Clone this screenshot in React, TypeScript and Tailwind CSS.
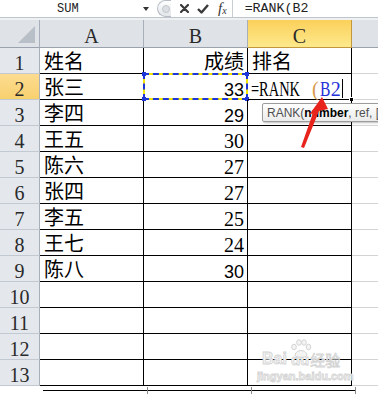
import React from 'react';

type Row = { n: number; name?: string; score?: string; sans?: boolean };

const rows: Row[] = [
  { n: 1, name: '姓名', score: '成绩' },
  { n: 2, name: '张三', score: '33', sans: true },
  { n: 3, name: '李四', score: '29', sans: true },
  { n: 4, name: '王五', score: '30' },
  { n: 5, name: '陈六', score: '27' },
  { n: 6, name: '张四', score: '27' },
  { n: 7, name: '李五', score: '25' },
  { n: 8, name: '王七', score: '24' },
  { n: 9, name: '陈八', score: '30', sans: true },
  { n: 10 },
  { n: 11 },
  { n: 12 },
  { n: 13 },
];

const cjk = "font-['Noto_Sans_CJK_SC',sans-serif]";
const serif = "font-['Liberation_Serif',serif]";
const sans = "font-['Liberation_Sans',sans-serif]";
const mono = "font-['Liberation_Mono',monospace]";

const FormulaBar = () => (
  <div className="flex h-[17px] items-center bg-white text-[#222]">
    <div className={`w-[140px] pl-[57px] text-[12px] leading-none ${mono}`}>SUM</div>
    <div className="ml-[3px] h-0 w-0 border-x-[3px] border-t-[4px] border-x-transparent border-t-[#333]" />
    <div className="ml-[8px] flex h-[17px] w-[14px] items-center justify-end rounded-l-full border border-r-0 border-[#b7bdc5] bg-linear-to-b from-white to-[#e2e5e9] pr-[1px]">
      <div className="h-[8px] w-[8px] rounded-full border border-[#c2c6cc] bg-[#dcdfe3]" />
    </div>
    <svg className="ml-[9px]" width="9" height="9" viewBox="0 0 9 9">
      <path d="M1 1 L8 8 M8 1 L1 8" stroke="#3a3a3a" strokeWidth="2.2" strokeLinecap="round" />
    </svg>
    <svg className="ml-[8px]" width="12" height="10" viewBox="0 0 12 10">
      <path d="M1 5 L4.5 8.5 L11 1" stroke="#3a3a3a" strokeWidth="2.4" fill="none" strokeLinejoin="round" />
    </svg>
    <div className={`ml-[9px] flex items-end leading-none text-[#333] italic ${serif}`}>
      <span className="text-[15px]">f</span>
      <span className="text-[10px]">x</span>
    </div>
    <div className="ml-[5px] h-full w-px bg-[#c9cdd2]" />
    <div className={`ml-[12px] text-[13.3px] leading-none ${mono}`}>=RANK(B2</div>
  </div>
);

const HeaderRow = () => (
  <div className={`flex h-[28px] ${serif} text-[20px] leading-none text-[#2a2a2a]`}>
    <div className="relative w-[40px] shrink-0 border-r border-b border-r-[#a7b0ba] border-b-[#9aa3ad] bg-[#dfe3e8]">
      <div className="absolute right-[4px] bottom-[4px] h-0 w-0 border-b-[17px] border-l-[17px] border-b-[#b9bfc6] border-l-transparent" />
    </div>
    {['A', 'B'].map((c) => (
      <div key={c} className="flex w-[104px] shrink-0 items-end justify-center border-r border-b border-r-[#a7b0ba] border-b-[#9aa3ad] bg-[#dfe3e8] pb-[1px]">
        {c}
      </div>
    ))}
    <div className="flex w-[104px] shrink-0 items-end justify-center border-r border-b border-r-[#c2973d] border-b-[#c2973d] bg-linear-to-b from-[#fbd05a] to-[#fde98b] pb-[1px]">
      C
    </div>
    <div className="flex-1 border-b border-b-[#9aa3ad] bg-[#dfe3e8]" />
  </div>
);

const DataRow = ({ r }: { r: Row }) => {
  const active = r.n === 2;
  return (
    <div className="flex h-[26px]">
      <div
        className={`flex w-[40px] shrink-0 items-end justify-center border-r border-b border-r-[#a7b0ba] border-b-[#c3c9d0] text-[20px] leading-none text-[#2a2a2a] ${serif} ${
          active ? 'bg-linear-to-b from-[#fcdc90] to-[#f8d06e]' : 'bg-[#e4e8ed]'
        }`}
      >
        {r.n}
      </div>
      <div className={`flex w-[104px] shrink-0 items-end border-r border-b border-black pb-[2px] pl-[4px] text-[20px] leading-none text-black ${cjk}`}>
        {r.name}
      </div>
      <div
        className={`relative flex w-[104px] shrink-0 items-end justify-end border-r border-b border-black pr-[3px] leading-none text-black ${
          r.n === 1 ? `${cjk} pb-[2px] text-[20px]` : r.sans ? `${sans} text-[18px]` : `${serif} text-[20px]`
        }`}
      >
        {r.score}
        {active && (
          <div className="absolute -top-[1px] -left-[1px] h-[27px] w-[105px]">
            <div className="absolute inset-0 border-2 border-[#f2e600]" />
            <div className="absolute inset-0 border-2 border-dashed border-[#1d36d8]" />
            <div className="absolute -top-[1px] -left-[1px] h-[4px] w-[4px] bg-[#1d36d8]" />
            <div className="absolute -top-[1px] -right-[1px] h-[4px] w-[4px] bg-[#1d36d8]" />
            <div className="absolute -bottom-[1px] -left-[1px] h-[4px] w-[4px] bg-[#1d36d8]" />
            <div className="absolute -right-[1px] -bottom-[1px] h-[4px] w-[4px] bg-[#1d36d8]" />
          </div>
        )}
      </div>
      <div className="relative flex w-[104px] shrink-0 items-end border-r border-b border-black pl-[3px] text-black">
        {r.n === 1 && <span className={`pb-[2px] pl-[1px] text-[20px] leading-none ${cjk}`}>排名</span>}
        {active && (
          <>
            <span className={`inline-block w-[50px] text-[20px] leading-none ${serif}`}>
              <span className="inline-block origin-left scale-x-[0.72]">=RANK</span>
            </span>
            <span className={`ml-[11px] text-[20px] leading-none text-[#d99a4a] ${serif}`}>(</span>
            <span className={`ml-[1px] inline-block w-[11px] text-[20px] leading-none text-[#2432d8] ${serif}`}>
              <span className="inline-block origin-left scale-x-[0.78]">B</span>
            </span>
            <span className={`text-[20px] leading-none text-[#2432d8] ${serif}`}>2</span>
            <span className="mb-[1px] ml-[1px] h-[19px] w-px bg-black" />
            <div className="absolute -right-[3px] -bottom-[3px] h-[5px] w-[5px] border border-white bg-black" />
          </>
        )}
      </div>
      <div className="flex-1 border-b border-[#d4d4d4]" />
    </div>
  );
};

const Tooltip = () => (
  <div
    className={`absolute top-[103px] left-[262px] flex h-[19px] w-[150px] items-center rounded-[2px] border border-[#9c9c9c] bg-linear-to-b from-white to-[#ebebeb] pl-[4px] text-[12px] leading-none whitespace-nowrap text-[#505050] shadow-[1px_1px_2px_rgba(0,0,0,0.25)] ${sans}`}
  >
    RANK(<b className="text-black">number</b>, ref, [order])
  </div>
);

const Arrow = () => (
  <svg className="pointer-events-none absolute top-0 left-0" width="378" height="394">
    <polygon points="322,97 328,109 319,111 304,148 301,147 313,113 309,115" fill="#e8231b" />
  </svg>
);

const Watermark = () => (
  <div className="pointer-events-none absolute top-[339px] left-[257px] w-[96px] whitespace-nowrap text-[#f4f4f4] [-webkit-text-stroke:0.8px_#d4d4d4]">
    <svg className="absolute top-0 left-[33px]" width="22" height="19" viewBox="0 0 22 19">
      <g fill="#f4f4f4" stroke="#d4d4d4" strokeWidth="1">
        <ellipse cx="4" cy="8" rx="2.3" ry="2.8" />
        <ellipse cx="9" cy="3.5" rx="2.3" ry="2.8" />
        <ellipse cx="14" cy="3.5" rx="2.3" ry="2.8" />
        <ellipse cx="18.5" cy="8" rx="2.3" ry="2.8" />
        <path d="M5 16 C6 10 16 10 17 16 C17 19 5 19 5 16 Z" />
      </g>
    </svg>
    <div className="flex items-end pt-[12px] pl-[5px]">
      <span className={`text-[16px] leading-none font-bold ${sans}`}>Bai</span>
      <span className={`ml-[4px] text-[15px] leading-none font-bold ${sans}`}>du</span>
      <span className={`ml-[1px] text-[15px] leading-none ${cjk}`}>经验</span>
    </div>
    <div className={`mt-[4px] text-[11px] leading-none font-bold ${sans}`}>jingyan.baidu.com</div>
  </div>
);

export default function App() {
  return (
    <div className="relative h-[394px] w-[378px] overflow-hidden bg-white">
      <FormulaBar />
      <div className="h-[3px] border-t border-[#bfc5cc] bg-[#eef0f2]" />
      <HeaderRow />
      {rows.map((r) => (
        <DataRow key={r.n} r={r} />
      ))}
      <div className="relative h-[9px]">
        <div className="absolute top-[4px] left-[43px] h-px w-[312px] bg-black" />
        <div className="absolute top-[1px] left-[147px] h-[8px] w-px bg-[#888]" />
        <div className="absolute top-[1px] left-[251px] h-[8px] w-px bg-[#888]" />
        <div className="absolute top-[1px] left-[355px] h-[8px] w-px bg-[#888]" />
      </div>
      <Tooltip />
      <Arrow />
      <Watermark />
    </div>
  );
}
